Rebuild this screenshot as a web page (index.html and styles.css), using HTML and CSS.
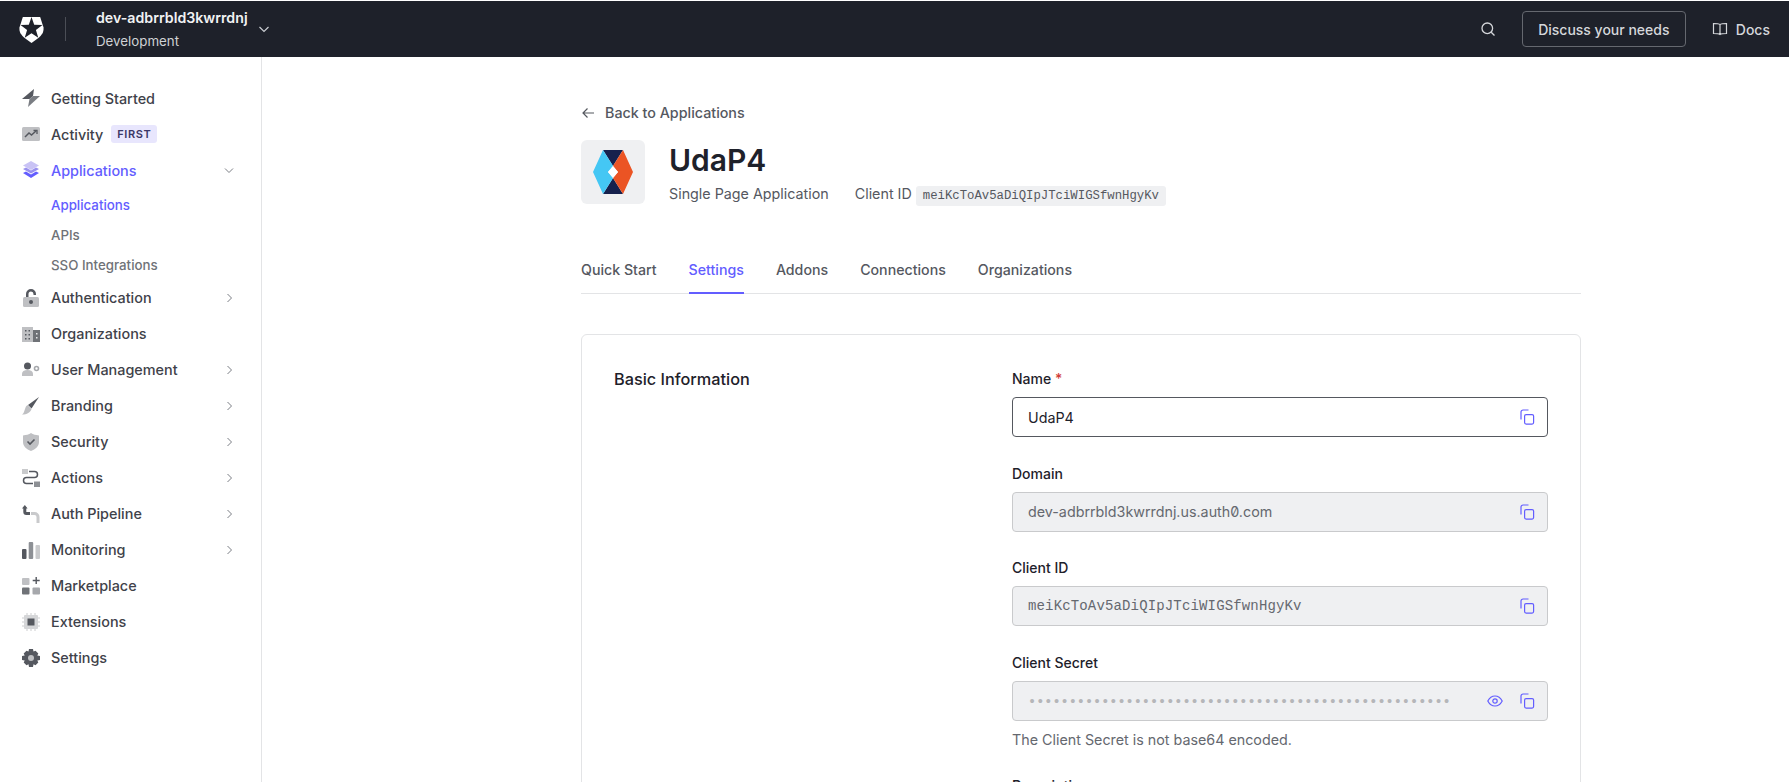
FILE: index.html
```html
<!DOCTYPE html>
<html lang="en">
<head>
  <meta charset="UTF-8" />
  <title>UdaP4 | Settings</title>
  <link rel="stylesheet" href="styles.css">
</head>
<body>
  <header class="topbar">
    <div class="tenant">
      <svg class="brand" viewBox="0 0 26 28"><path d="M4 1h18l3.500 11c.5 5-2 8-5 10.500L13 28l-7.500-5.500C2.500 20 0 17 .5 12z" fill="#fff"/><path d="M13 1l2.800 8.100 8.600.2-6.800 5.200 2.450 8.200L13 17.800l-7.050 4.900 2.450-8.200-6.800-5.200 8.600-.2z" fill="#1e212a"/></svg>
      <span class="divider"></span>
      <div class="tenant-text">
        <strong>dev-adbrrbld3kwrrdnj</strong>
        <span>Development</span>
      </div>
      <svg class="tenant-caret" viewBox="0 0 12 12"><path d="M1.500 4l4.500 4.500L10.500 4" fill="none" stroke="#c9ccd1" stroke-width="1.200"/></svg>
    </div>
    <div class="top-actions">
      <svg class="search" viewBox="0 0 16 16"><circle cx="7.300" cy="7.300" r="5.300" fill="none" stroke="#d5d7db" stroke-width="1.300"/><path d="M11.200 11.200l3.300 3.300" stroke="#d5d7db" stroke-width="1.300"/></svg>
      <button class="discuss">Discuss your needs</button>
      <a class="docs" href="#">
        <svg viewBox="0 0 16 16"><path d="M8 3.500C7 2.700 5 2.500 1.500 2.500v10c3.500 0 5.500.3 6.500 1 1-.7 3-1 6.500-1v-10C11 2.500 9 2.700 8 3.500zM8 3.500v10" fill="none" stroke="#d5d7db" stroke-width="1.200"/></svg>
        Docs
      </a>
    </div>
  </header>

  <div class="layout">
    <nav class="sidebar">
      <a class="nav-item" href="#">
        <svg viewBox="0 0 18 18"><path d="M12 0L0 10h7.500L11 7z" fill="#55585f"/><path d="M11 7h7L6 18l1.500-8z" fill="#7a7d83"/></svg>
        Getting Started
      </a>
      <a class="nav-item" href="#">
        <svg viewBox="0 0 18 18"><rect y="2" width="18" height="14" rx="1.500" fill="#bfc0c3"/><path d="M3 12l4-4 2.500 2L14 6" fill="none" stroke="#55585f" stroke-width="1.500"/><path d="M11.500 5.500H15V9" fill="none" stroke="#55585f" stroke-width="1.300"/></svg>
        Activity <span class="tag">FIRST</span>
      </a>
      <a class="nav-item active" href="#">
        <svg viewBox="0 0 18 18"><path d="M9 0l8 4.500L9 9 1 4.500z" fill="#c9c3f5"/><path d="M1 8l3-1.500L9 9.500l5-3L17 8l-8 4.500z" fill="#9a91ee"/><path d="M1 12l3-1.500 5 3 5-3 3 1.500-8 5z" fill="#635dff"/></svg>
        Applications
        <svg class="caret" viewBox="0 0 12 12"><path d="M2 4.500l4 4 4-4" fill="none" stroke="#7b7e85" stroke-width="1"/></svg>
      </a>
      <div class="subnav">
        <a class="active" href="#">Applications</a>
        <a href="#">APIs</a>
        <a href="#">SSO Integrations</a>
      </div>
      <a class="nav-item" href="#">
        <svg viewBox="0 0 18 18"><path d="M4 8V5a5 5 0 0 1 10 0v1h-2.500V5a2.500 2.500 0 0 0-5 0v3z" fill="#55585f"/><rect x="1" y="8" width="16" height="10" rx="1.500" fill="#bfc0c3"/><circle cx="9" cy="13" r="2" fill="#55585f"/></svg>
        Authentication
        <svg class="caret" viewBox="0 0 12 12"><path d="M4.500 2l4 4-4 4" fill="none" stroke="#7b7e85" stroke-width="1"/></svg>
      </a>
      <a class="nav-item" href="#">
        <svg viewBox="0 0 18 18"><rect y="2" width="11" height="15" fill="#bfc0c3"/><rect x="11" y="5" width="7" height="12" fill="#6f7277"/><path d="M3 5h1.500v1.500H3zM6.500 5H8v1.500H6.500zM3 9h1.500v1.500H3zM6.500 9H8v1.500H6.500zM3 13h1.500v1.500H3zM6.500 13H8v1.500H6.500z" fill="#55585f"/><path d="M14 8h1.500v1.500H14zM14 12h1.500v1.500H14z" fill="#e6e6e8"/></svg>
        Organizations
      </a>
      <a class="nav-item" href="#">
        <svg viewBox="0 0 18 18"><circle cx="5.500" cy="5" r="3.500" fill="#55585f"/><path d="M0 15v-2c0-2.500 2-4 5.500-4s5.500 1.500 5.500 4v2z" fill="#bfc0c3"/><circle cx="14.500" cy="7.500" r="2" fill="none" stroke="#a6a8ac" stroke-width="1.600"/></svg>
        User Management
        <svg class="caret" viewBox="0 0 12 12"><path d="M4.500 2l4 4-4 4" fill="none" stroke="#7b7e85" stroke-width="1"/></svg>
      </a>
      <a class="nav-item" href="#">
        <svg viewBox="0 0 18 18"><path d="M17 0L6 8l3.500 3.500z" fill="#55585f"/><path d="M5.500 8l4 4c-1 3.500-4.500 5.500-9.500 5.500 2-1 2-3 3-5.500.6-1.800 1.200-3.200 2.500-4z" fill="#bfc0c3"/></svg>
        Branding
        <svg class="caret" viewBox="0 0 12 12"><path d="M4.500 2l4 4-4 4" fill="none" stroke="#7b7e85" stroke-width="1"/></svg>
      </a>
      <a class="nav-item" href="#">
        <svg viewBox="0 0 18 18"><path d="M9 0c2 1.500 5 2 8 2.500V9c0 4-3.500 7.500-8 9-4.500-1.500-8-5-8-9V2.500C4 2 7 1.500 9 0z" fill="#bfc0c3"/><path d="M5.500 8.500L8 11l4.500-4.500" fill="none" stroke="#55585f" stroke-width="1.600"/></svg>
        Security
        <svg class="caret" viewBox="0 0 12 12"><path d="M4.500 2l4 4-4 4" fill="none" stroke="#7b7e85" stroke-width="1"/></svg>
      </a>
      <a class="nav-item" href="#">
        <svg viewBox="0 0 18 18"><rect x="0" y="0" width="6" height="5" fill="#c9cacc"/><rect x="12" y="12.500" width="6" height="5.500" fill="#8d9095"/><path d="M7 2.500h5.500a3 3 0 0 1 0 6h-8a3 3 0 0 0 0 6H11" fill="none" stroke="#55585f" stroke-width="1.500"/></svg>
        Actions
        <svg class="caret" viewBox="0 0 12 12"><path d="M4.500 2l4 4-4 4" fill="none" stroke="#7b7e85" stroke-width="1"/></svg>
      </a>
      <a class="nav-item" href="#">
        <svg viewBox="0 0 18 18"><path d="M2.800 2v5c0 1 .5 1.500 1.500 1.500H8" fill="none" stroke="#55585f" stroke-width="3"/><path d="M0 3.500L2.800 0l2.800 3.500z" fill="#55585f"/><path d="M9 8.500h3.500c2 0 3.500 1.500 3.500 3.500v6" fill="none" stroke="#c9cacc" stroke-width="3"/></svg>
        Auth Pipeline
        <svg class="caret" viewBox="0 0 12 12"><path d="M4.500 2l4 4-4 4" fill="none" stroke="#7b7e85" stroke-width="1"/></svg>
      </a>
      <a class="nav-item" href="#">
        <svg viewBox="0 0 18 18"><rect y="8" width="4.500" height="10" rx="1" fill="#55585f"/><rect x="6.700" y="1" width="4.500" height="17" rx="1" fill="#8d9095"/><rect x="13.500" y="4" width="4.500" height="14" rx="1" fill="#c9cacc"/></svg>
        Monitoring
        <svg class="caret" viewBox="0 0 12 12"><path d="M4.500 2l4 4-4 4" fill="none" stroke="#7b7e85" stroke-width="1"/></svg>
      </a>
      <a class="nav-item" href="#">
        <svg viewBox="0 0 18 18"><rect y="1" width="7.500" height="7" rx="1" fill="#bfc0c3"/><rect y="10.500" width="7.500" height="7" rx="1" fill="#6f7277"/><rect x="10.500" y="10.500" width="7.500" height="7" rx="1" fill="#a6a8ac"/><path d="M14.200 0v7M10.700 3.500h7" stroke="#55585f" stroke-width="1.400"/></svg>
        Marketplace
      </a>
      <a class="nav-item" href="#">
        <svg viewBox="0 0 18 18"><rect x="2" y="2" width="14" height="14" rx="1" fill="#d5d6d8"/><rect x="5.500" y="5.500" width="7" height="7" fill="#55585f"/><path d="M5 0v18M9 0v18M13 0v18M0 5h18M0 9h18M0 13h18" stroke="#bfc0c3" stroke-width=".8" stroke-dasharray="2 14"/></svg>
        Extensions
      </a>
      <a class="nav-item" href="#">
        <svg viewBox="0 0 18 18"><path d="M7 0h4l.5 2.500 2-.8 2.800 2.800-1 2 2.700.5v4l-2.700.5 1 2-2.800 2.800-2-1L11 18H7l-.5-2.700-2 1-2.800-2.800 1-2L0 11V7l2.700-.5-1-2 2.800-2.800 2 .8z" fill="#55585f"/><circle cx="9" cy="9" r="3" fill="#bfc0c3"/></svg>
        Settings
      </a>
    </nav>

    <main class="content">
      <div class="page">
        <a class="back" href="#">
          <svg viewBox="0 0 14 14"><path d="M13 7H2M6.500 2.500L2 7l4.500 4.500" fill="none" stroke="#55585f" stroke-width="1.200"/></svg>
          Back to Applications
        </a>
        <div class="app-head">
          <div class="app-logo">
            <svg viewBox="0 0 40 44"><path d="M10 0h20L20 16z" fill="#16214d"/><path d="M10 44h20L20 28z" fill="#16214d"/><path d="M10 0L0 22l10 22 10-16-5-6 5-6z" fill="#44c7f4"/><path d="M30 0l10 22-10 22-10-16 5-6-5-6z" fill="#eb5424"/><path d="M20 16l5 6-5 6-5-6z" fill="#fff"/></svg>
          </div>
          <div class="app-text">
            <h1>UdaP4</h1>
            <div class="app-meta">
              <span>Single Page Application</span>
              <span class="meta-id">Client ID <code>meiKcToAv5aDiQIpJTciWIGSfwnHgyKv</code></span>
            </div>
          </div>
        </div>

        <div class="tabs">
          <a href="#">Quick Start</a>
          <a class="current" href="#">Settings</a>
          <a href="#">Addons</a>
          <a href="#">Connections</a>
          <a href="#">Organizations</a>
        </div>

        <section class="card">
          <h2>Basic Information</h2>
          <div class="fields">
            <div class="field">
              <label>Name <em>*</em></label>
              <div class="input focus">
                <span>UdaP4</span>
                <svg class="act" viewBox="0 0 16 16"><use href="#copy"/></svg>
              </div>
            </div>
            <div class="field">
              <label>Domain</label>
              <div class="input readonly">
                <span>dev-adbrrbld3kwrrdnj.us.auth0.com</span>
                <svg class="act" viewBox="0 0 16 16"><use href="#copy"/></svg>
              </div>
            </div>
            <div class="field">
              <label>Client ID</label>
              <div class="input readonly">
                <span class="mono">meiKcToAv5aDiQIpJTciWIGSfwnHgyKv</span>
                <svg class="act" viewBox="0 0 16 16"><use href="#copy"/></svg>
              </div>
            </div>
            <div class="field">
              <label>Client Secret</label>
              <div class="input readonly">
                <span class="dots">••••••••••••••••••••••••••••••••••••••••••••••••••••</span>
                <svg class="act eye" viewBox="0 0 16 16"><path d="M.8 8C2.500 4.700 5 3 8 3s5.500 1.700 7.200 5c-1.700 3.300-4.200 5-7.200 5S2.500 11.300.8 8z" fill="none" stroke="#635dff" stroke-width="1.200"/><circle cx="8" cy="8" r="2.200" fill="none" stroke="#635dff" stroke-width="1.200"/></svg>
                <svg class="act" viewBox="0 0 16 16"><use href="#copy"/></svg>
              </div>
              <p class="help">The Client Secret is not base64 encoded.</p>
            </div>
            <div class="field">
              <label>Description</label>
            </div>
          </div>
        </section>
      </div>
    </main>
  </div>

  <svg class="defs" width="0" height="0">
    <symbol id="copy" viewBox="0 0 16 16">
      <rect x="5.600" y="5.600" width="9" height="9.500" rx="1.500" fill="none" stroke="#635dff" stroke-width="1.200"/>
      <path d="M2 10.500V3a2 2 0 0 1 2-2h5.500" fill="none" stroke="#635dff" stroke-width="1.200"/>
    </symbol>
  </svg>
</body>
</html>
```

FILE: styles.css
```css
* {
  margin: 0; padding: 0; box-sizing: border-box;
}

html, body {
  height: 100%;
  overflow: hidden;
}

body {
  font-family: 'Inter', sans-serif;
  font-size: 14.300px;
  color: #1e212a;
  background: #fff;
  padding-top: 1px;
}

a {
  color: inherit;
  text-decoration: none;
}

.defs {
  position: absolute;
}

.topbar {
  height: 56px;
  background: #1e212a;
  display: flex;
  align-items: center;
  justify-content: space-between;
  padding: 0 19px;
}

.tenant {
  display: flex;
  align-items: center;
}

.brand {
  width: 25px;
  height: 27px;
}

.divider {
  width: 1px;
  height: 24px;
  background: #4b4e56;
  margin: 0 30px 0 21px;
}

.tenant-text {
  display: flex;
  flex-direction: column;
  gap: 5px;
  font-size: 13.300px;
  line-height: 18px;
  color: #cfd1d5;
}

.tenant-text strong {
  font-size: 14.200px;
  font-weight: 600;
  color: #f1f2f3;
}

.tenant-caret {
  width: 12px;
  height: 12px;
  margin-left: 10px;
}

.top-actions {
  display: flex;
  align-items: center;
}

.search {
  width: 16px;
  height: 16px;
  margin-right: 26px;
}

.discuss {
  height: 36px;
  width: 164px;
  background: none;
  border: 1px solid #65686f;
  border-radius: 4px;
  color: #d5d7db;
  font: 500 14px 'Inter', sans-serif;
  margin-right: 26px;
}

.docs {
  display: flex;
  align-items: center;
  gap: 8px;
  color: #d5d7db;
  font-weight: 500;
  font-size: 14px;
}

.docs svg {
  width: 16px;
  height: 16px;
}

.layout {
  display: flex;
  height: 725px;
}

.sidebar {
  width: 262px;
  flex-shrink: 0;
  border-right: 1px solid #e3e4e6;
  padding: 23px 22px 0;
}

.nav-item {
  display: flex;
  align-items: center;
  height: 36px;
  color: #3f424a;
  font-weight: 500;
  font-size: 14.400px;
}

.nav-item > svg:first-child {
  width: 18px;
  height: 18px;
  margin-right: 11px;
  flex-shrink: 0;
}

.nav-item.active {
  color: #635dff;
}

.caret {
  width: 12px;
  height: 12px;
  margin-left: auto;
  margin-right: 4px;
}

.tag {
  background: #e8e6fd;
  color: #3b3766;
  font-size: 11px;
  font-weight: 600;
  letter-spacing: .6px;
  padding: 2px 6px;
  border-radius: 3px;
  margin-left: 8px;
}

.subnav {
  display: flex;
  flex-direction: column;
  padding: 0 0 0 29px;
  margin-top: 2px;
  margin-bottom: -.5px;
}

.subnav a {
  height: 30px;
  line-height: 30px;
  font-size: 13.300px;
  font-weight: 500;
  color: #6f7277;
}

.subnav a.active {
  color: #635dff;
}

.content {
  flex: 1;
  padding-left: 319px;
}

.page {
  width: 1000px;
  padding-top: 46px;
}

.back {
  display: flex;
  align-items: center;
  gap: 10px;
  color: #55585f;
  font-weight: 500;
  line-height: 20px;
}

.back svg {
  width: 14px;
  height: 14px;
}

.app-head {
  display: flex;
  margin-top: 17px;
}

.app-logo {
  width: 64px;
  height: 64px;
  background: #eff0f2;
  border-radius: 6px;
  display: flex;
  align-items: center;
  justify-content: center;
}

.app-logo svg {
  width: 40px;
  height: 44px;
}

.app-text {
  margin-left: 24px;
}

.app-text h1 {
  font-size: 30px;
  font-weight: 600;
  line-height: 40px;
  color: #1e212a;
}

.app-meta {
  display: flex;
  gap: 26px;
  margin-top: 4px;
  color: #55585f;
  line-height: 20px;
}

.meta-id code {
  font-family: 'Liberation Mono', monospace;
  font-size: 12.300px;
  background: #eff0f2;
  border-radius: 3px;
  padding: 3px 7px;
}

.tabs {
  display: flex;
  gap: 32px;
  margin-top: 52px;
  border-bottom: 1px solid #e3e4e6;
  font-size: 14.200px;
}

.tabs a {
  height: 35px;
  line-height: 20px;
  padding-top: 2px;
  color: #55585f;
  font-weight: 500;
}

.tabs a.current {
  color: #635dff;
  border-bottom: 2px solid #635dff;
  margin-bottom: -1px;
  height: 36px;
}

.card {
  display: flex;
  margin-top: 40px;
  border: 1px solid #e3e4e6;
  border-radius: 6px;
  padding: 34px 32px;
  height: 600px;
}

.card h2 {
  width: 398px;
  flex-shrink: 0;
  font-size: 16.300px;
  font-weight: 500;
  line-height: 20px;
  color: #1e212a;
}

.fields {
  width: 536px;
}

.field {
  margin-bottom: 26.500px;
}

.field label {
  display: block;
  font-size: 14px;
  line-height: 20px;
  font-weight: 500;
  margin-bottom: 8px;
  color: #1e212a;
}

.field label em {
  color: #d03c38;
  font-style: normal;
}

.input {
  height: 40px;
  border: 1px solid #c9cacc;
  border-radius: 4px;
  display: flex;
  align-items: center;
  padding: 0 12px 0 15px;
}

.input span {
  flex: 1;
  white-space: nowrap;
  overflow: hidden;
}

.input.focus {
  border-color: #55585f;
}

.input.readonly {
  background: #eff0f2;
  color: #65686f;
  font-feature-settings: "zero";
}

.mono {
  font-family: 'Liberation Mono', monospace;
  font-size: 14px;
  letter-spacing: .15px;
}

.dots {
  font-family: 'DejaVu Sans Mono', monospace;
  color: #b5b6b9;
  font-size: 13.500px;
}

.act {
  width: 16px;
  height: 16px;
  flex-shrink: 0;
}

.act.eye {
  margin: 0 16px;
}

.help {
  margin-top: 9px;
  line-height: 20px;
  color: #65686f;
}
```
